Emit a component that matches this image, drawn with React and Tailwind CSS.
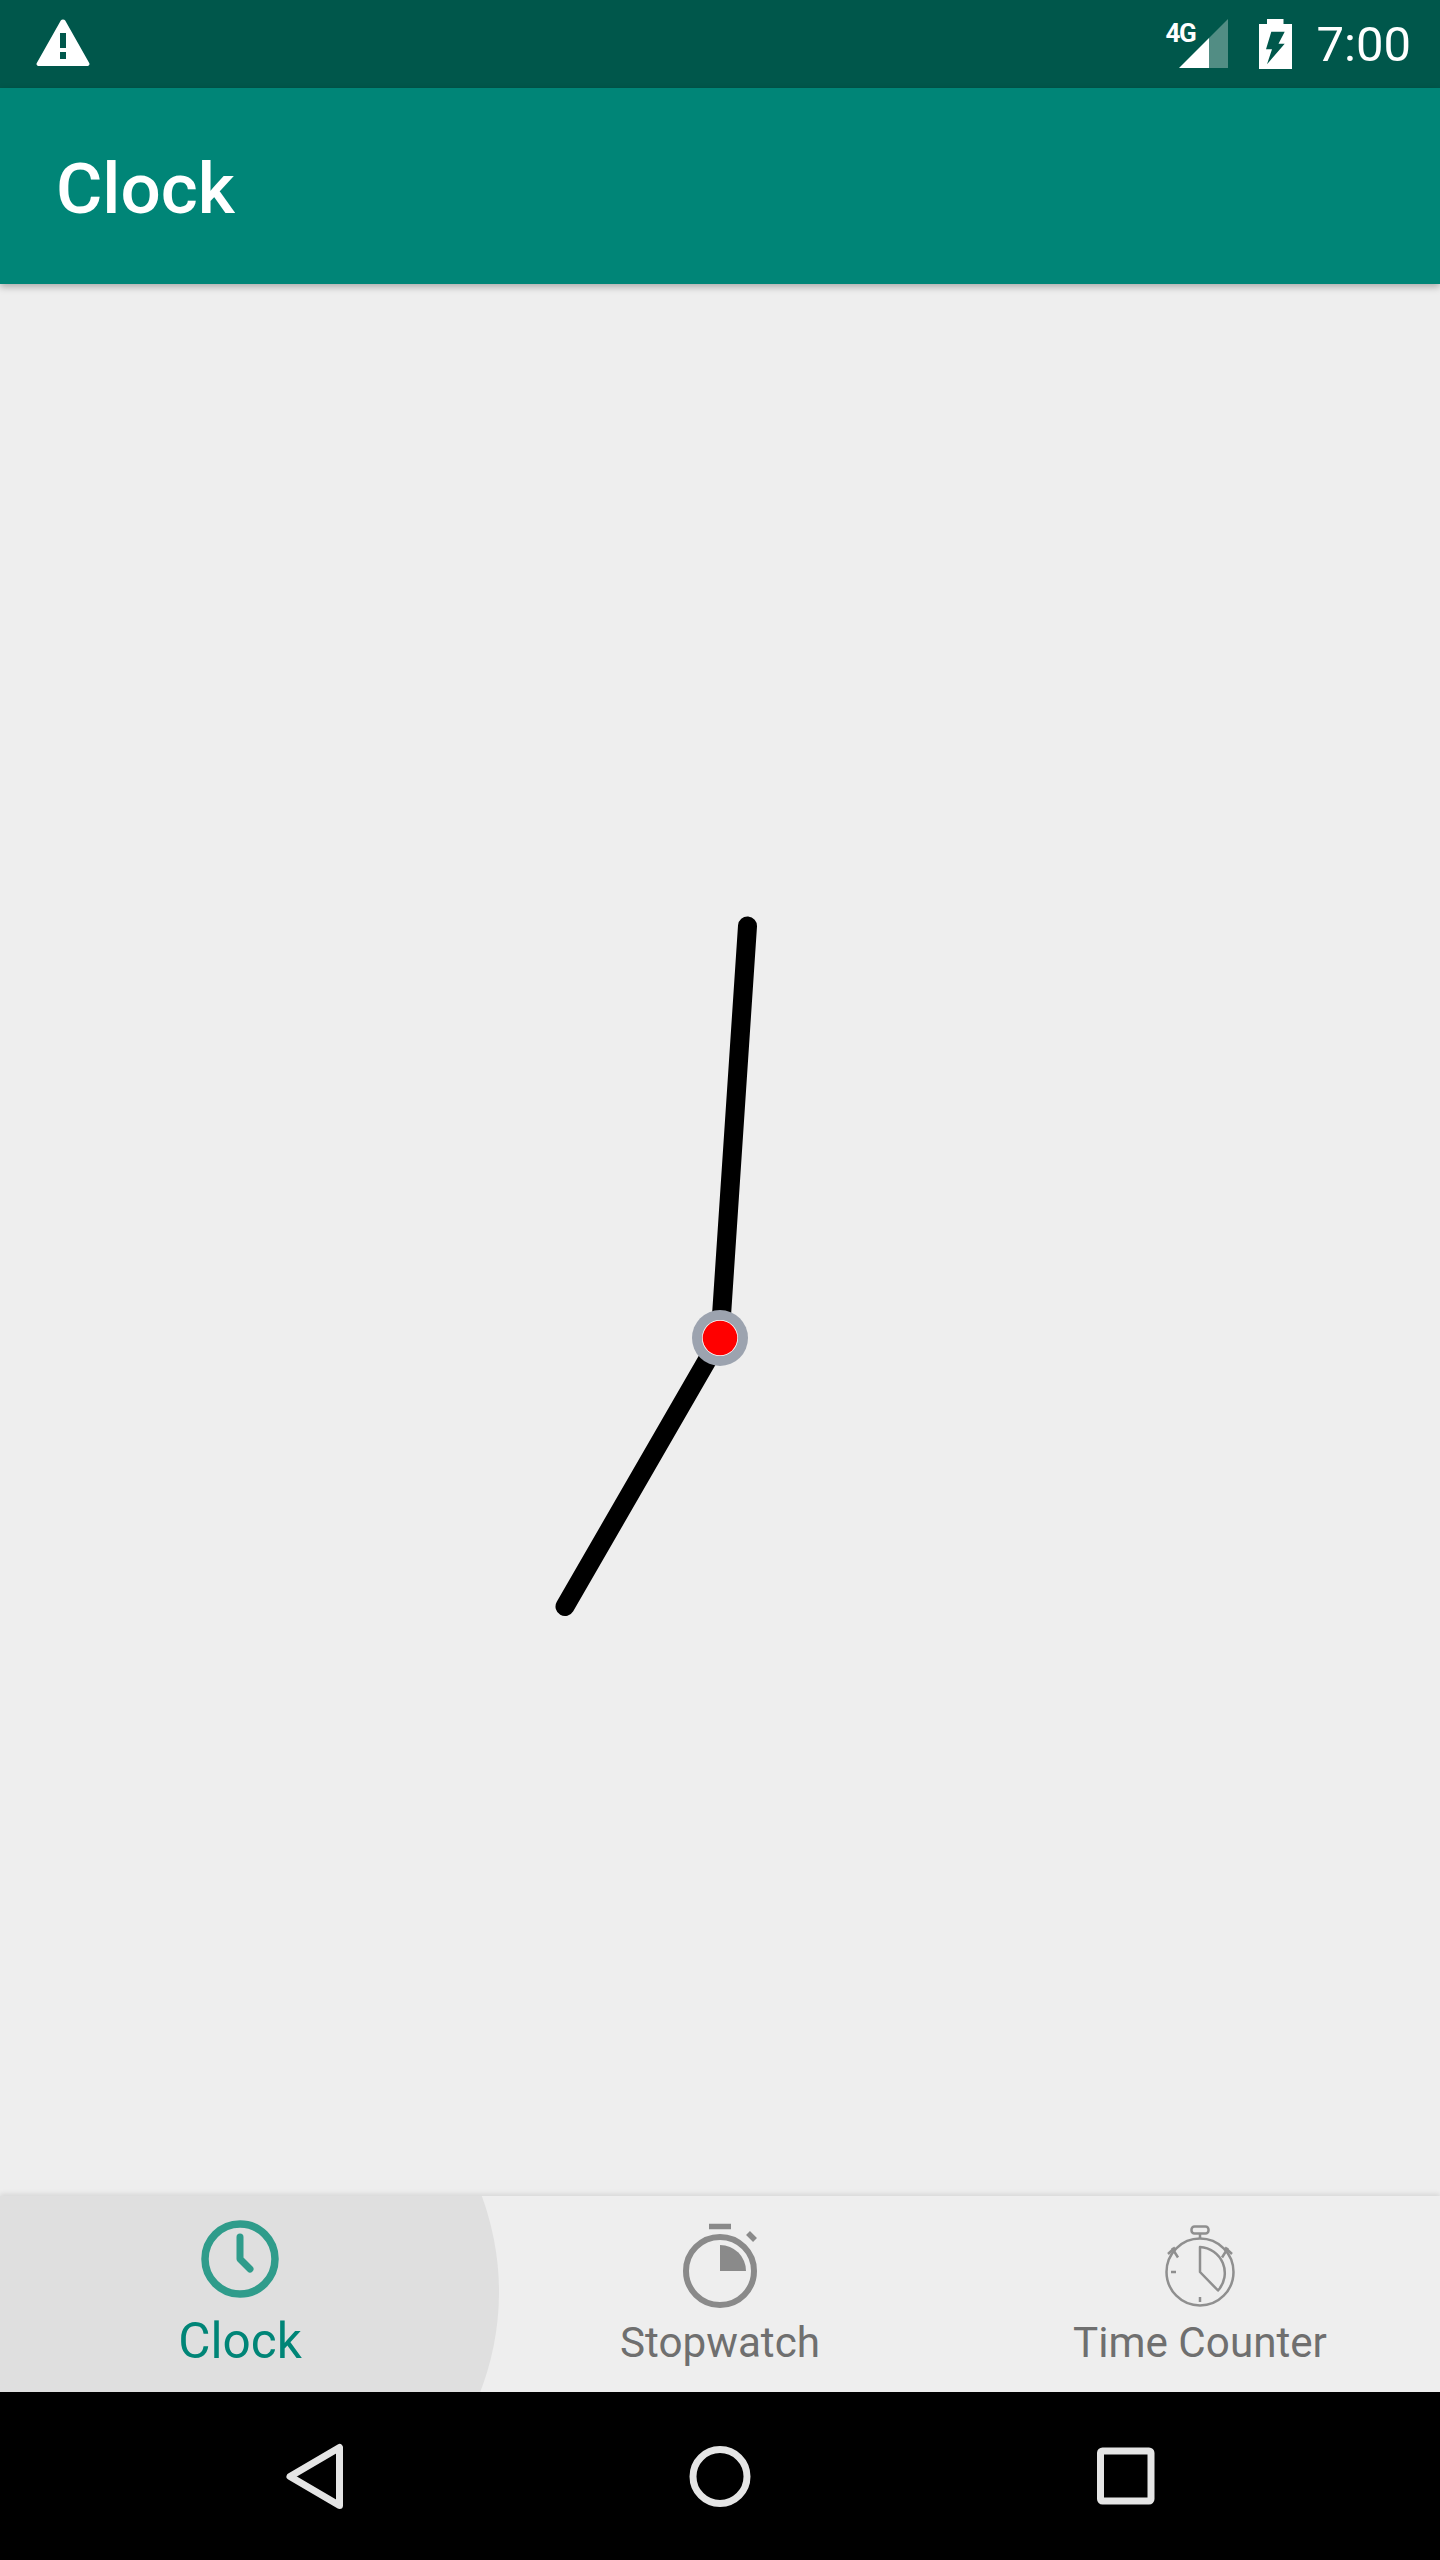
import React from 'react';

const TEAL = '#008577';

const WarningIcon = () => (
  <svg width="54" height="48" viewBox="0 0 54 48" className="block">
    <path
      fillRule="evenodd"
      fill="#fff"
      d="M24.8 1.6a2.6 2.6 0 0 1 4.4 0l24 42.4a2 2 0 0 1-1.8 3H2.6a2 2 0 0 1-1.8-3zM24 14v15h6V14zM24 33v7h6v-7z"
    />
  </svg>
);

const SignalIcon = () => (
  <div className="relative w-[62px] h-[50px]">
    <svg width="62" height="50" viewBox="0 0 62 50" className="block">
      <path d="M12 49 L42 19 V49 Z" fill="#fff" />
      <path d="M42 19 L61 0 V49 H42 Z" fill="#fff" fillOpacity="0.32" />
    </svg>
    <span className="absolute left-[-1px] top-[-1px] text-[26px] leading-[30px] font-bold tracking-[-1.5px] text-white">4G</span>
  </div>
);

const BatteryIcon = () => (
  <svg width="33" height="50" viewBox="0 0 33 50" className="block">
    <path
      fillRule="evenodd"
      fill="#fff"
      d="M8 0h16.500v5H33v45H0V5h8zM12.300 12.700 L7 30.300 H13 L8 45.300 L25.700 24.700 H19.500 L25.700 12.700z"
    />
  </svg>
);

const ClockTabIcon = () => (
  <svg width="100" height="116" viewBox="0 0 100 116" fill="none" stroke="#2f9c8b" className="block">
    <circle cx="50" cy="63" r="35" strokeWidth="7.5" />
    <path d="M50 41V63L60 73" strokeWidth="7" strokeLinecap="round" strokeLinejoin="round" />
  </svg>
);

const StopwatchIcon = () => (
  <svg width="100" height="116" viewBox="0 0 100 116" fill="none" className="block">
    <circle cx="50" cy="75" r="34" stroke="#8a8a8a" strokeWidth="6" />
    <path d="M39 30.500H61" stroke="#8a8a8a" strokeWidth="5.500" />
    <path d="M78 37 L85 44" stroke="#8a8a8a" strokeWidth="5.500" />
    <path d="M50 49A26 26 0 0 1 76 75H50Z" fill="#8a8a8a" />
  </svg>
);

const TimeCounterIcon = () => (
  <svg width="100" height="116" viewBox="0 0 100 116" fill="none" stroke="#8f8f8f" strokeWidth="2.500" className="block">
    <circle cx="50" cy="76" r="33.500" />
    <rect x="41.500" y="30.500" width="17" height="7" rx="3" />
    <path d="M50 37.500V42.500" />
    <path d="M22 52 L28 61.500M18 58 L25 51.500" />
    <path d="M78 52 L72 61.500M75 51.500 L82 58" />
    <path d="M21 76H26M50 101V106" />
    <path d="M50 51V76L68 94.500A26 26 0 0 0 50 51Z" strokeLinejoin="round" />
  </svg>
);

const TABS = [
  { label: 'Clock', Icon: ClockTabIcon, active: true },
  { label: 'Stopwatch', Icon: StopwatchIcon },
  { label: 'Time Counter', Icon: TimeCounterIcon },
];

function StatusBar() {
  return (
    <div className="h-[88px] shrink-0 bg-[#00574b] flex items-center justify-between pl-[36px] pr-[29px]">
      <div className="-mt-[2px]"><WarningIcon /></div>
      <div className="flex items-center">
        <SignalIcon />
        <div className="ml-[30px]"><BatteryIcon /></div>
        <span className="ml-[25px] mt-[2px] text-[49px] leading-[56px] text-white">7:00</span>
      </div>
    </div>
  );
}

function ClockFace() {
  // viewBox uses the same numbers as the page, hands pivot on 720,1338
  return (
    <svg width="360" height="716" viewBox="540 904 360 716" className="block">
      <g stroke="#000" strokeWidth="19" strokeLinecap="round">
        <line x1="720" y1="1338" x2="747.500" y2="926" />
        <line x1="720" y1="1338" x2="565" y2="1606.500" />
      </g>
      <circle cx="720" cy="1338" r="28" fill="#9ca3af" />
      <circle cx="720" cy="1338" r="18" fill="#fff" />
      <circle cx="720" cy="1338" r="17.300" fill="#f00" />
    </svg>
  );
}

function BottomTabs() {
  return (
    <nav className="relative h-[196px] shrink-0 bg-[#eeeeee] shadow-[0_-2px_5px_rgba(0,0,0,0.1)]">
      <div className="absolute inset-0 overflow-hidden">
        <div className="absolute left-[-53px] top-[-180px] w-[552px] h-[552px] rounded-full bg-[#dfdfdf]" />
      </div>
      <div className="relative grid grid-cols-3 h-full">
        {TABS.map(({ label, Icon, active }) => (
          <div key={label} className="flex flex-col items-center">
            <Icon />
            {active ? (
              <span className="mt-[1px] text-[49.5px] leading-[56px] text-[#008577]">{label}</span>
            ) : (
              <span className="mt-[6px] text-[42.2px] leading-[50px] text-[#6f6f6f]">{label}</span>
            )}
          </div>
        ))}
      </div>
    </nav>
  );
}

function SystemNav() {
  return (
    <div className="h-[168px] shrink-0 bg-black relative">
      <svg width="1440" height="168" viewBox="0 2392 1440 168" fill="none" stroke="#e5e5e5" strokeWidth="7" className="block">
        <path d="M339.500 2447.500V2505.500L290 2476.500Z" strokeLinejoin="round" />
        <circle cx="720" cy="2476.500" r="27" />
        <rect x="1100.500" y="2451" width="50.500" height="50" rx="2" />
      </svg>
    </div>
  );
}

export default function App() {
  return (
    <div className="w-[1440px] h-[2560px] flex flex-col bg-[#eeeeee] font-[Roboto,sans-serif] overflow-hidden">
      <StatusBar />
      <header
        className="relative z-10 h-[196px] shrink-0 flex items-center pl-[56px] pt-[6px] shadow-[0_3px_7px_rgba(0,0,0,0.28)]"
        style={{ backgroundColor: TEAL }}
      >
        <h1 className="text-[71px] leading-[82px] font-medium text-white">Clock</h1>
      </header>
      <main className="flex-1 flex justify-center pt-[620px]">
        <ClockFace />
      </main>
      <BottomTabs />
      <SystemNav />
    </div>
  );
}
